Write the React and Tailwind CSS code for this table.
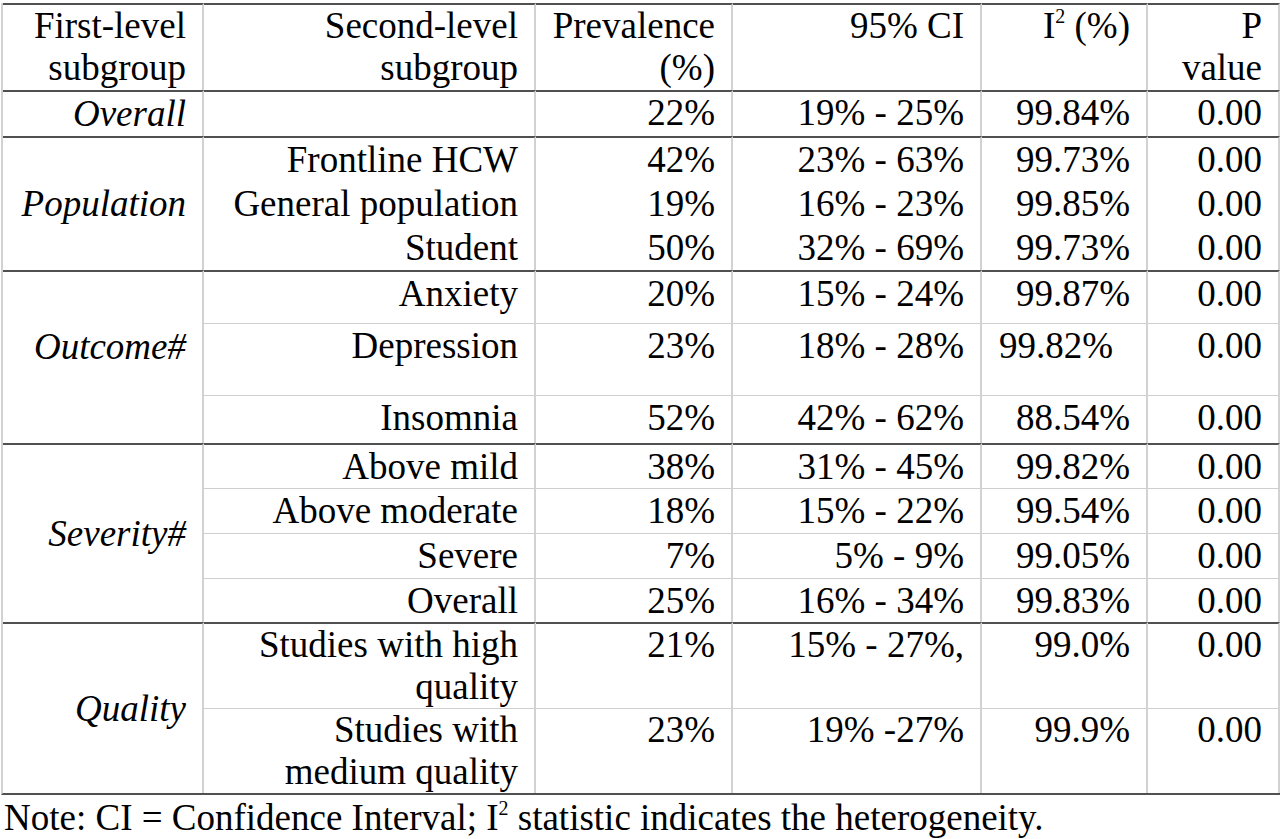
import React from "react";

const dark = "border-t-2 border-t-[#505050]";
const light = "border-t border-t-[#cfcfcf]";

const groups = [
  {
    label: "Overall",
    lines: false,
    lead: "leading-[42px]",
    rows: [{ sub: "", v: ["22%", "19% - 25%", "99.84%", "0.00"], h: "h-[44px]" }],
  },
  {
    label: "Population",
    lines: false,
    lead: "leading-[44px]",
    rows: [
      { sub: "Frontline HCW", v: ["42%", "23% - 63%", "99.73%", "0.00"], h: "h-[46px]" },
      { sub: "General population", v: ["19%", "16% - 23%", "99.85%", "0.00"], h: "h-[44px]" },
      { sub: "Student", v: ["50%", "32% - 69%", "99.73%", "0.00"], h: "h-[44px]" },
    ],
  },
  {
    label: "Outcome#",
    lines: true,
    lead: "leading-[44px]",
    labelPad: "pb-[22px]",
    rows: [
      { sub: "Anxiety", v: ["20%", "15% - 24%", "99.87%", "0.00"], h: "h-[53px]" },
      { sub: "Depression", v: ["23%", "18% - 28%", "99.82%", "0.00"], h: "h-[72px]", leftI2: true },
      { sub: "Insomnia", v: ["52%", "42% - 62%", "88.54%", "0.00"], h: "h-[48px]" },
    ],
  },
  {
    label: "Severity#",
    lines: true,
    lead: "leading-[43px]",
    rows: [
      { sub: "Above mild", v: ["38%", "31% - 45%", "99.82%", "0.00"], h: "h-[45px]" },
      { sub: "Above moderate", v: ["18%", "15% - 22%", "99.54%", "0.00"], h: "h-[45px]" },
      { sub: "Severe", v: ["7%", "5% - 9%", "99.05%", "0.00"], h: "h-[45px]" },
      { sub: "Overall", v: ["25%", "16% - 34%", "99.83%", "0.00"], h: "h-[44px]" },
    ],
  },
  {
    label: "Quality",
    lines: true,
    lead: "leading-[42px]",
    rows: [
      {
        sub: (
          <>
            Studies with high
            <br />
            quality
          </>
        ),
        v: ["21%", "15% - 27%,", "99.0%", "0.00"],
        h: "h-[86px]",
      },
      {
        sub: (
          <>
            Studies with
            <br />
            medium quality
          </>
        ),
        v: ["23%", "19% -27%", "99.9%", "0.00"],
        h: "h-[85px]",
      },
    ],
  },
];

const cell = "border-r-2 border-r-[#d2d2d2] pr-4 text-right align-top";

export default function App() {
  return (
    <div className="bg-white min-h-screen pt-[3px] text-black text-[37px] font-['Liberation_Serif','Times_New_Roman',serif]">
      <table className="table-fixed border-separate border-spacing-0 w-[1277px] ml-[1px] border-l-2 border-l-[#d2d2d2] border-b-2 border-b-[#505050]">
        <colgroup>
          <col className="w-[201px]" />
          <col className="w-[332px]" />
          <col className="w-[197px]" />
          <col className="w-[249px]" />
          <col className="w-[166px]" />
          <col className="w-[132px]" />
        </colgroup>
        <thead>
          <tr className="leading-[42px]">
            <th className={`${cell} ${dark} font-normal h-[87px]`}>
              First-level
              <br />
              subgroup
            </th>
            <th className={`${cell} ${dark} font-normal`}>
              Second-level
              <br />
              subgroup
            </th>
            <th className={`${cell} ${dark} font-normal`}>
              Prevalence
              <br />
              (%)
            </th>
            <th className={`${cell} ${dark} font-normal`}>95% CI</th>
            <th className={`${cell} ${dark} font-normal`}>
              I<sup className="text-[20px] -top-[15px]">2</sup> (%)
            </th>
            <th className={`${cell} ${dark} font-normal`}>
              P
              <br />
              value
            </th>
          </tr>
        </thead>
        <tbody>
          {groups.map((g) =>
            g.rows.map((r, i) => {
              const top = i === 0 ? dark : g.lines ? light : "";
              return (
                <tr key={g.label + i} className={g.lead}>
                  {i === 0 && (
                    <td
                      rowSpan={g.rows.length}
                      className={`border-r-2 border-r-[#d2d2d2] pr-4 text-right align-middle italic leading-[44px] ${dark} ${
                        g.labelPad || ""
                      }`}
                    >
                      {g.label}
                    </td>
                  )}
                  <td className={`${cell} ${top} ${r.h}`}>{r.sub}</td>
                  <td className={`${cell} ${top}`}>{r.v[0]}</td>
                  <td className={`${cell} ${top}`}>{r.v[1]}</td>
                  {r.leftI2 ? (
                    <td className={`border-r-2 border-r-[#d2d2d2] pl-[17px] text-left align-top ${top}`}>
                      {r.v[2]}
                    </td>
                  ) : (
                    <td className={`${cell} ${top}`}>{r.v[2]}</td>
                  )}
                  <td className={`${cell} ${top}`}>{r.v[3]}</td>
                </tr>
              );
            })
          )}
        </tbody>
      </table>
      <p className="pl-[4px] leading-[42px] mt-[2px]">
        Note: CI = Confidence Interval; I<sup className="text-[20px] -top-[15px]">2</sup> statistic indicates the
        heterogeneity.
      </p>
    </div>
  );
}
